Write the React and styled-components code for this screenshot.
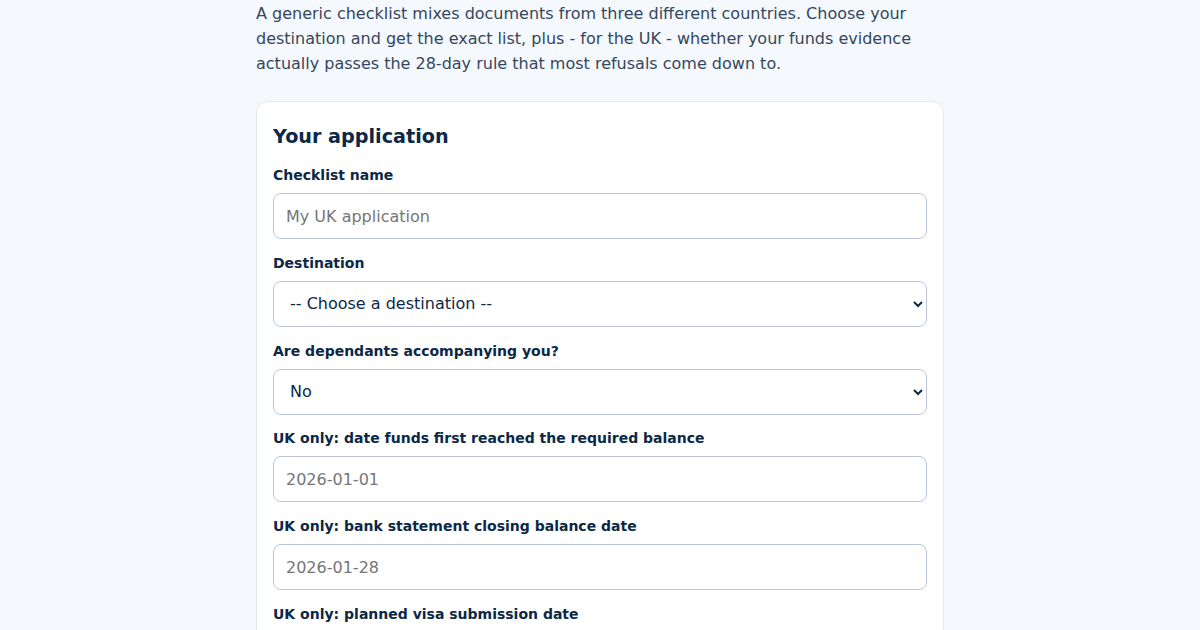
import React from "react";
import styled, { createGlobalStyle } from "styled-components";

const Global = createGlobalStyle`
  html, body { margin: 0; padding: 0; background: #f5f9fd; }
  body { font-family: "DejaVu Sans", "Liberation Sans", sans-serif; color: #0b2847; }
  * { box-sizing: border-box; }
`;

const Page = styled.main`
  max-width: 688px;
  margin: 0 auto;
  padding-top: 1px;
`;

const Intro = styled.p`
  margin: 0 0 25px;
  font-size: 16px;
  line-height: 25px;
  color: #34465e;
`;

const Card = styled.section`
  background: #ffffff;
  border: 1px solid #e1e8f0;
  border-radius: 12px;
  padding: 16px;
`;

const Title = styled.h2`
  margin: 5px 0 14px;
  font-size: 19.2px;
  line-height: 28px;
  font-weight: 700;
  color: #0b2847;
`;

const Field = styled.div`
  display: flex;
  flex-direction: column;
  gap: 7px;
  margin-bottom: 13.75px;
`;

const Label = styled.label`
  font-size: 14px;
  line-height: 21px;
  font-weight: 700;
  color: #0b2847;
`;

const Input = styled.input`
  height: 46px;
  width: 100%;
  padding: 0 12px;
  font: inherit;
  font-size: 16px;
  line-height: 44px;
  color: #0b2847;
  background: #fff;
  border: 1px solid #b9c5da;
  border-radius: 8px;
  outline: none;
  &::placeholder { color: #767676; }
`;

const Select = styled.select`
  height: 46px;
  width: 100%;
  padding: 0 8px 0 12px;
  font: inherit;
  font-size: 16px;
  color: #0b2847;
  background: #fff;
  border: 1px solid #b9c5da;
  border-radius: 8px;
  outline: none;
`;

export default function App() {
  return (
    <>
      <Global />
      <Page>
        <Intro>
          A generic checklist mixes documents from three different countries. Choose your
          destination and get the exact list, plus - for the UK - whether your funds evidence
          actually passes the 28-day rule that most refusals come down to.
        </Intro>
        <Card>
          <Title>Your application</Title>
          <Field>
            <Label htmlFor="name">Checklist name</Label>
            <Input id="name" placeholder="My UK application" />
          </Field>
          <Field>
            <Label htmlFor="dest">Destination</Label>
            <Select id="dest" defaultValue="">
              <option value="">-- Choose a destination --</option>
              <option value="uk">United Kingdom</option>
            </Select>
          </Field>
          <Field>
            <Label htmlFor="deps">Are dependants accompanying you?</Label>
            <Select id="deps" defaultValue="no">
              <option value="no">No</option>
              <option value="yes">Yes</option>
            </Select>
          </Field>
          <Field>
            <Label htmlFor="d1">UK only: date funds first reached the required balance</Label>
            <Input id="d1" placeholder="2026-01-01" />
          </Field>
          <Field>
            <Label htmlFor="d2">UK only: bank statement closing balance date</Label>
            <Input id="d2" placeholder="2026-01-28" />
          </Field>
          <Field>
            <Label htmlFor="d3">UK only: planned visa submission date</Label>
            <Input id="d3" placeholder="2026-02-10" />
          </Field>
        </Card>
      </Page>
    </>
  );
}
